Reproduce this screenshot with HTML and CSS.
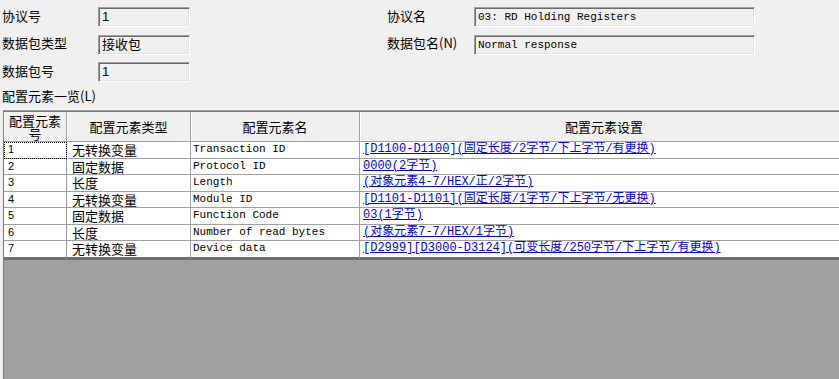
FILE: index.html
```html
<!DOCTYPE html>
<html lang="zh-CN">
<head>
  <meta charset="UTF-8">
  <meta name="viewport" content="width=device-width, initial-scale=1.0">
  <title>配置元素一览</title>
  <link rel="stylesheet" href="styles.css">
</head>
<body>
  <div class="form">
    <div class="group left">
      <label>协议号</label>
      <div class="field">1</div>
      <label>数据包类型</label>
      <div class="field">接收包</div>
      <label>数据包号</label>
      <div class="field">1</div>
    </div>
    <div class="group right">
      <label>协议名</label>
      <div class="field mono">03: RD Holding Registers</div>
      <label>数据包名(N)</label>
      <div class="field mono">Normal response</div>
    </div>
  </div>

  <div class="list-title">配置元素一览(L)</div>

  <div class="grid">
    <table class="elements">
      <colgroup>
        <col class="c-num">
        <col class="c-type">
        <col class="c-name">
        <col class="c-set">
      </colgroup>
      <thead>
        <tr>
          <th class="wrap">配置元素号</th>
          <th>配置元素类型</th>
          <th>配置元素名</th>
          <th>配置元素设置</th>
        </tr>
      </thead>
      <tbody>
        <tr>
          <td class="num focus">1</td>
          <td class="type">无转换变量</td>
          <td class="name">Transaction ID</td>
          <td class="set"><a href="#">[D1100-D1100](固定长度/2字节/下上字节/有更换)</a></td>
        </tr>
        <tr>
          <td class="num">2</td>
          <td class="type">固定数据</td>
          <td class="name">Protocol ID</td>
          <td class="set"><a href="#">0000(2字节)</a></td>
        </tr>
        <tr>
          <td class="num">3</td>
          <td class="type">长度</td>
          <td class="name">Length</td>
          <td class="set"><a href="#">(对象元素4-7/HEX/正/2字节)</a></td>
        </tr>
        <tr>
          <td class="num">4</td>
          <td class="type">无转换变量</td>
          <td class="name">Module ID</td>
          <td class="set"><a href="#">[D1101-D1101](固定长度/1字节/下上字节/无更换)</a></td>
        </tr>
        <tr>
          <td class="num">5</td>
          <td class="type">固定数据</td>
          <td class="name">Function Code</td>
          <td class="set"><a href="#">03(1字节)</a></td>
        </tr>
        <tr>
          <td class="num">6</td>
          <td class="type">长度</td>
          <td class="name">Number of read bytes</td>
          <td class="set"><a href="#">(对象元素7-7/HEX/1字节)</a></td>
        </tr>
        <tr class="last">
          <td class="num">7</td>
          <td class="type">无转换变量</td>
          <td class="name">Device data</td>
          <td class="set"><a href="#">[D2999][D3000-D3124](可变长度/250字节/下上字节/有更换)</a></td>
        </tr>
      </tbody>
    </table>
  </div>
</body>
</html>
```

FILE: styles.css
```css
body {
  margin: 0;
  background: #f0f0f0;
  color: #000;
  font-family: "Noto Sans CJK SC", sans-serif;
  font-size: 13px;
  width: 839px;
  height: 379px;
  overflow: hidden;
}

.form {
  display: flex;
  padding: 7px 0 0 2px;
}

.group {
  display: grid;
  grid-auto-rows: 20px;
  row-gap: 7.5px;
  align-items: center;
}

.group.left {
  grid-template-columns: 96px 92px;
}

.group.right {
  grid-template-columns: 87px 281px;
  margin-left: 197px;
}

.group label {
  line-height: 16px;
  margin-top: -3px;
  white-space: nowrap;
}

.field {
  box-sizing: border-box;
  height: 20px;
  padding: 0 3px;
  border: 1px solid;
  border-color: #a0a0a0 #fff #fff #a0a0a0;
  box-shadow: inset 1px 1px 0 #696969, inset -1px -1px 0 #e3e3e3;
  background: #f0f0f0;
  font-family: "Liberation Sans", "Noto Sans CJK SC", sans-serif;
  font-size: 13px;
  line-height: 18px;
  white-space: nowrap;
  overflow: hidden;
}

.field.mono {
  font-family: "Liberation Mono", monospace;
  font-size: 11px;
}

.list-title {
  margin-top: 6px;
  padding-left: 2px;
  line-height: 16px;
}

.grid {
  margin: 6px 0 0 3px;
  width: 840px;
  height: 269px;
  border-top: 1px solid #a0a0a0;
  border-left: 1px solid #7c7c7c;
  background: #a0a0a0;
  overflow: hidden;
}

.elements {
  table-layout: fixed;
  width: 845px;
  border-collapse: separate;
  border-spacing: 0;
  border-top: 1px solid #7c7c7c;
  background: #fff;
}

.c-num { width: 63px; }
.c-type { width: 124px; }
.c-name { width: 169px; }
.c-set { width: 489px; }

.elements th,
.elements td {
  border-right: 1px solid #a0a0a0;
  border-bottom: 1px solid #a0a0a0;
  white-space: nowrap;
  overflow: hidden;
  padding: 0;
}

.elements th {
  height: 29px;
  background: #f0f0f0;
  box-shadow: inset 1px 0 0 #fff;
  font-weight: normal;
  font-size: 13px;
  line-height: 15px;
  text-align: center;
}

.elements th.wrap {
  white-space: normal;
  line-height: 13px;
  padding: 0 4px;
}

.elements tbody tr {
  height: 16.5px;
}

.elements td {
  height: 15.5px;
  line-height: 15.5px;
  vertical-align: middle;
}

.elements td > * {
  vertical-align: top;
}

.elements tr.last td {
  border-bottom: 3px solid #6e6e6e;
}

.num {
  padding-left: 4px !important;
  font-family: "Liberation Sans", sans-serif;
  font-size: 11px;
}

.focus {
  outline: 1px dotted #000;
  outline-offset: -1px;
}

.type {
  padding-left: 5px !important;
  font-size: 13px;
}

.name {
  padding-left: 2px !important;
  font-family: "Liberation Mono", monospace;
  font-size: 11px;
}

.set {
  padding-left: 3px !important;
}

.set a {
  color: #0000ff;
  text-decoration: underline;
  font-family: "Liberation Mono", "Noto Sans CJK SC", monospace;
  font-size: 12px;
}
```
